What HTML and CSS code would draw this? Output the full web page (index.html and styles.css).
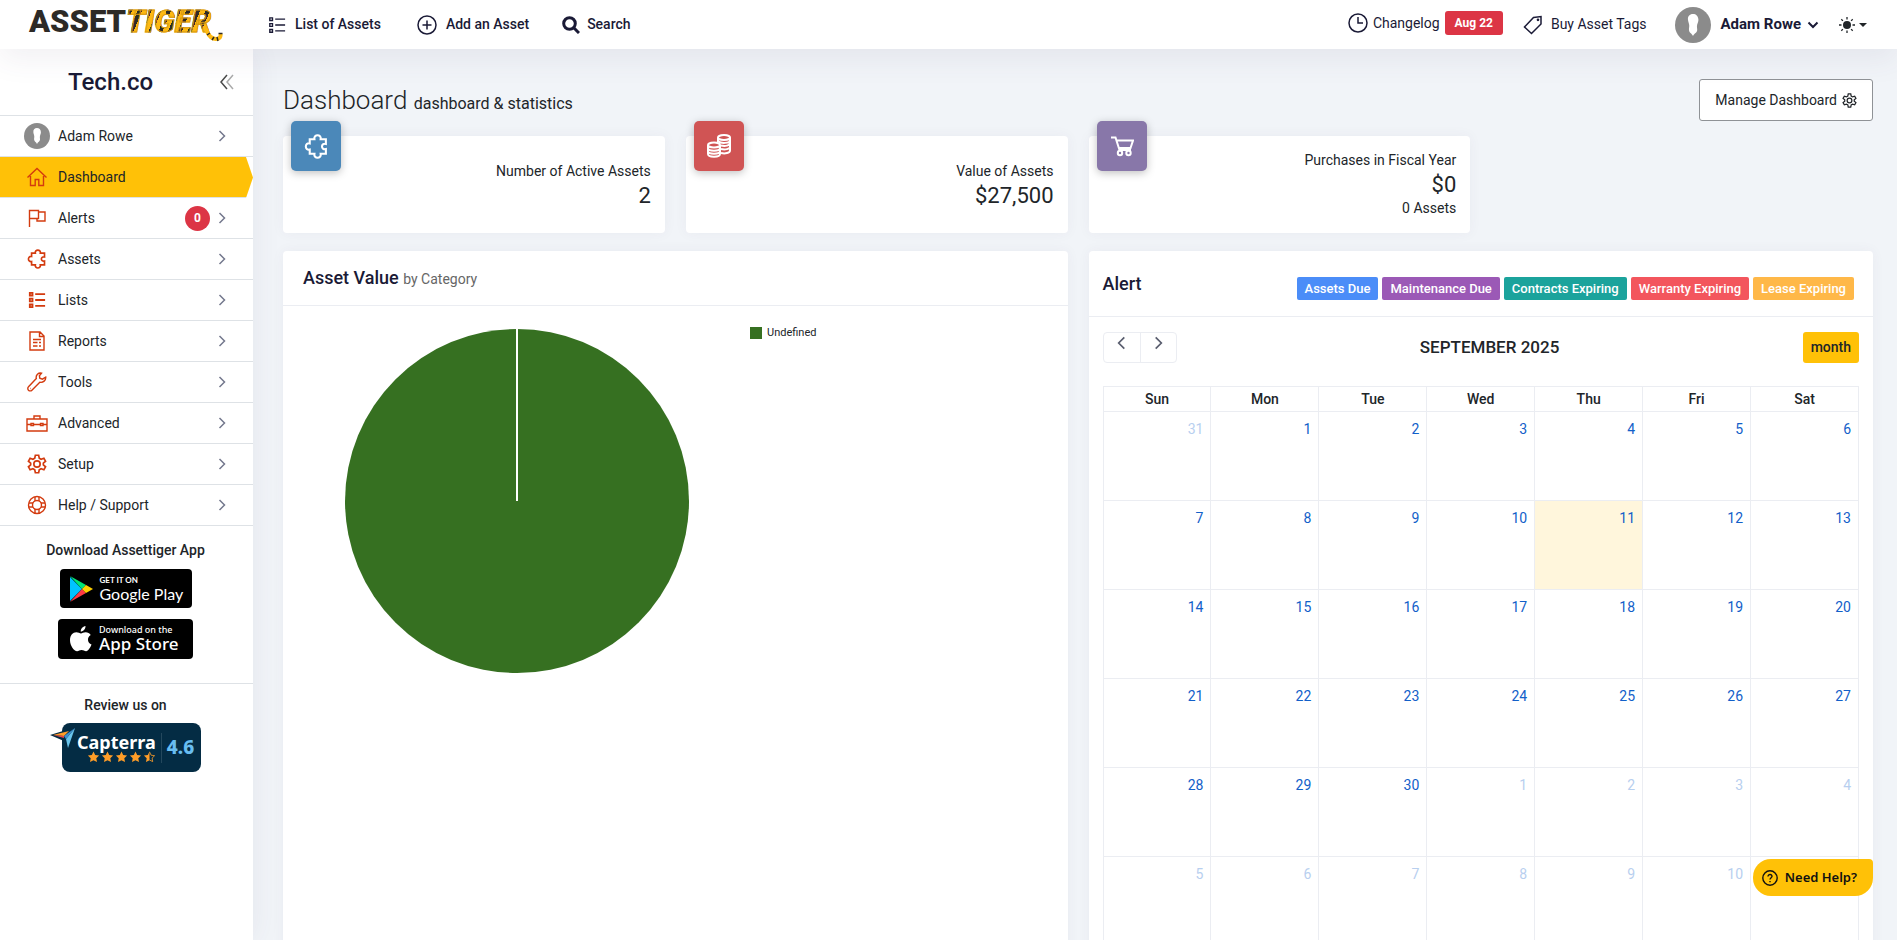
FILE: index.html
```html
<!DOCTYPE html>
<html lang="en">
<head>
  <meta charset="UTF-8">
  <meta name="viewport" content="width=device-width, initial-scale=1">
  <title>Dashboard - AssetTiger</title>
  <link rel="stylesheet" href="styles.css">
</head>
<body>
  <svg width="0" height="0" class="sprite" aria-hidden="true">
    <symbol id="i-list" viewBox="0 0 20 20"><path d="M2 2h3v3H2zM2 8.500h3v3H2zM2 15h3v3H2zM8 3.500h11M8 10h11M8 16.500h11"/></symbol>
    <symbol id="i-puzzle" viewBox="0 0 24 24"><path d="M5.500 5H10c-1-5 7-5 6 0h5v4.500c-5-1-5 6 0 5V19h-5c1 5-7 5-6 0H5.500v-4c-5 1-5-7 0-6z"/></symbol>
    <symbol id="i-gear" viewBox="0 0 24 24"><circle cx="12" cy="12" r="3.800"/><path d="M10 1.500h4l.7 3.500 2.200 1.300 3.400-1.200 2 3.600-2.700 2.300v2l2.700 2.300-2 3.600-3.400-1.200-2.200 1.300-.7 3.500h-4L9.300 19l-2.200-1.300-3.400 1.200-2-3.600L4.400 13v-2L1.700 8.700l2-3.600 3.400 1.200L9.300 5z"/></symbol>
    <symbol id="i-right" viewBox="0 0 8 12"><path d="M1.500 1l5 5-5 5"/></symbol>
    <symbol id="i-left" viewBox="0 0 8 12"><path d="M6.500 1l-5 5 5 5"/></symbol>
    <symbol id="i-avatar" viewBox="0 0 36 36"><circle cx="18" cy="18" r="18" fill="#8b8b8b" stroke="none"/><path d="M18 7c-3.500 0-5.500 2.500-5 6 .2 2 1 3 1.200 5 .2 2.500-.4 3-.2 5 .2 3 2.500 3 4 6 1.500-3 4-3 4.200-6 .1-2-.6-3 0-5.500.6-2 1.300-3 1.200-5C23.200 9 21 7 18 7z" fill="#fff" stroke="none"/></symbol>
    <symbol id="i-star" viewBox="0 0 12 12"><path d="M6 .5l1.700 3.500 3.900.5-2.800 2.700.7 3.800L6 9.200 2.500 11l.7-3.800L.4 4.500l3.900-.5z"/></symbol>
  </svg>

  <header class="topbar">
    <a href="#" class="logo" aria-label="AssetTiger">
      <span class="logo-asset">ASSET</span><span class="logo-tiger">TIGER</span>
      <svg class="logo-tail" width="18" height="14" viewBox="0 0 18 14"><path d="M1 1c2 6 5 10 10 10 3.500 0 5-2 4.500-5" stroke="#fdb913" stroke-width="4"/><path d="M17.500 5.500h-4M5 5L2 7M9 9l-2 3M12 9l1 4" stroke="#2d2a26" stroke-width="1.500"/></svg>
    </a>
    <nav class="topnav">
      <a href="#"><svg class="icon" width="18" height="18"><use href="#i-list"/></svg>List of Assets</a>
      <a href="#"><svg class="icon" width="20" height="20" viewBox="0 0 20 20"><circle cx="10" cy="10" r="9"/><path d="M10 5.500v9M5.500 10h9"/></svg>Add an Asset</a>
      <a href="#" class="search"><svg class="icon thick" width="18" height="18" viewBox="0 0 18 18"><circle cx="7.500" cy="7.500" r="5.800"/><path d="M12 12l5 5"/></svg>Search</a>
    </nav>
    <div class="topright">
      <a href="#" class="changelog"><svg class="icon" width="20" height="20" viewBox="0 0 20 20"><circle cx="10" cy="10" r="9"/><path d="M10 4v6h5"/></svg>Changelog <span class="date">Aug 22</span></a>
      <a href="#" class="tags"><svg class="icon" width="20" height="20" viewBox="0 0 20 20"><path d="M10.500 2.500L18 1.500v7.500l-9.500 9.500L1.500 12z"/><circle cx="15" cy="4.800" r=".6"/></svg>Buy Asset Tags</a>
      <button type="button" class="user"><svg width="36" height="36"><use href="#i-avatar"/></svg>Adam Rowe<svg class="icon" width="12" height="8" viewBox="0 0 12 8"><path d="M1.500 1.500L6 6l4.500-4.500" stroke-width="2"/></svg></button>
      <button type="button" class="theme" aria-label="Theme"><svg width="16" height="16" viewBox="0 0 16 16"><circle cx="8" cy="8" r="4" fill="#212529"/><path d="M8 0v2.500M8 13.500V16M0 8h2.500M13.500 8H16M2.300 2.300l1.600 1.600M12.100 12.100l1.600 1.600M13.700 2.300l-1.600 1.600M3.900 12.100l-1.600 1.600" stroke="#212529" stroke-width="1.300"/></svg><span class="caret"></span></button>
    </div>
  </header>

  <div class="layout">
    <aside class="sidebar">
      <div class="company">
        <span>Tech.co</span>
        <button type="button" class="collapse" aria-label="Collapse menu"><svg width="16" height="16" viewBox="0 0 16 16"><path d="M8 1L2 8l6 7" stroke="#4a4a4a"/><path d="M14 1L8 8l6 7" stroke="#aaa"/></svg></button>
      </div>
      <nav class="menu">
        <a href="#"><span class="mi"><svg width="26" height="26"><use href="#i-avatar"/></svg></span>Adam Rowe<svg class="arrow" width="8" height="12"><use href="#i-right"/></svg></a>
        <a href="#" class="active"><span class="mi"><svg width="20" height="20" viewBox="0 0 20 20"><path d="M.5 10.500L10 1.500l9.500 9M3.500 9v9.500h4.700v-6h3.600v6h4.700V9"/></svg></span>Dashboard</a>
        <a href="#"><span class="mi"><svg width="18" height="18" viewBox="0 0 18 18"><path d="M1.500 18V1.500h9v8h-9M10.500 3H17v9H9V9.500"/></svg></span>Alerts<span class="count">0</span><svg class="arrow" width="8" height="12"><use href="#i-right"/></svg></a>
        <a href="#"><span class="mi heavy"><svg width="20" height="20"><use href="#i-puzzle"/></svg></span>Assets<svg class="arrow" width="8" height="12"><use href="#i-right"/></svg></a>
        <a href="#"><span class="mi heavy"><svg width="18" height="18"><use href="#i-list"/></svg></span>Lists<svg class="arrow" width="8" height="12"><use href="#i-right"/></svg></a>
        <a href="#"><span class="mi"><svg width="16" height="20" viewBox="0 0 16 20"><path d="M1 1h10l4 4v14H1zM10.500 1v4.500H15M4 8.500h8M4 11.500h4.500M10 11.500h2M4 15h4.500M10 15h2"/></svg></span>Reports<svg class="arrow" width="8" height="12"><use href="#i-right"/></svg></a>
        <a href="#"><span class="mi"><svg width="20" height="20" viewBox="0 0 20 20"><path d="M14.500 1.200c-3-.7-6 1.800-5.200 5.300L1.500 14.800a2.300 2.300 0 0 0 3.400 3.400l7.900-8c3.300.8 6.300-2 5.900-5l-3.300 2-2.600-1-.4-2.500z"/><path d="M3 16.500h.5"/></svg></span>Tools<svg class="arrow" width="8" height="12"><use href="#i-right"/></svg></a>
        <a href="#"><span class="mi"><svg width="22" height="18" viewBox="0 0 22 18"><path d="M1 5h20v12H1zM8 5V2h6v3M1 10.500h4.500M8 10.500h6M16.500 10.500H21M5 9.500h2.500v2H5zM14.500 9.500H17v2h-2.500z"/></svg></span>Advanced<svg class="arrow" width="8" height="12"><use href="#i-right"/></svg></a>
        <a href="#"><span class="mi heavy"><svg width="20" height="20"><use href="#i-gear"/></svg></span>Setup<svg class="arrow" width="8" height="12"><use href="#i-right"/></svg></a>
        <a href="#"><span class="mi"><svg width="20" height="20" viewBox="0 0 20 20"><circle cx="10" cy="10" r="8.500"/><circle cx="10" cy="10" r="4.500"/><path d="M8 6V1.800M12 6V1.800M8 14v4.200M12 14v4.200M6 8H1.800M6 12H1.800M14 8h4.200M14 12h4.200"/></svg></span>Help / Support<svg class="arrow" width="8" height="12"><use href="#i-right"/></svg></a>
      </nav>
      <section class="side-box download">
        <h2>Download Assettiger App</h2>
        <a href="#" class="store google">
          <svg width="24" height="26" viewBox="0 0 24 26"><path d="M1 1v24l12-12z" fill="#00c3ff"/><path d="M1 0l16 9-4 4z" fill="#00e676"/><path d="M1 26l16-9-4-4z" fill="#ff3a44"/><path d="M17 9l7 4-7 4-4-4z" fill="#ffd000"/></svg>
          <span class="store-text"><small>GET IT ON</small><b>Google Play</b></span>
        </a>
        <a href="#" class="store apple">
          <svg width="22" height="26" viewBox="0 0 22 26"><path d="M15.500 0c.2 2.800-2 5.500-4.800 5.600C10.500 3 12.800.4 15.500 0zM11 7.500c1 0 2.500-1.200 4.700-1.200 2 0 3.900 1 5 2.700-4 2.400-3.400 7.800.8 9.500-1 2.700-3.200 6.700-5.400 6.700-1.700 0-2.400-1.100-4.500-1.100s-2.800 1.100-4.500 1.100C4 25.200 0 19.500 0 14.200c0-5 3-7.900 6.200-7.900 2 0 3.700 1.200 4.800 1.200z" fill="#fff"/></svg>
          <span class="store-text"><small>Download on the</small><b>App Store</b></span>
        </a>
      </section>
      <section class="side-box review">
        <h2>Review us on</h2>
        <a href="#" class="capterra">
          <svg class="capterra-mark" width="26" height="24" viewBox="0 0 26 24"><path d="M0 8l26-8-7 24-5-10z" fill="#042c44"/><path d="M3 8l16-4-5 5z" fill="#ff9d28"/><path d="M3 8l11 1v2z" fill="#e54747"/><path d="M25 1l-7 20-2-9z" fill="#68c5ed"/><path d="M25 1L14 9l2 3z" fill="#3b8fd0"/></svg>
          <span class="capterra-main"><b>Capterra</b>
            <span class="stars">
              <svg width="13" height="12"><use href="#i-star"/></svg><svg width="13" height="12"><use href="#i-star"/></svg><svg width="13" height="12"><use href="#i-star"/></svg><svg width="13" height="12"><use href="#i-star"/></svg><svg width="13" height="12" viewBox="0 0 12 12"><path d="M6 .5V9.200L2.500 11l.7-3.800L.4 4.500l3.900-.5z"/><path d="M6 .8l1.600 3.400 3.500.5-2.500 2.400.6 3.500L6 9" fill="none" stroke="#ff9d28" stroke-width=".8"/></svg>
            </span>
          </span>
          <span class="score">4.6</span>
        </a>
      </section>
    </aside>

    <main class="content">
      <div class="page-head">
        <h1>Dashboard <small>dashboard &amp; statistics</small></h1>
        <button type="button" class="manage">Manage Dashboard<svg width="15" height="15"><use href="#i-gear"/></svg></button>
      </div>

      <div class="cards">
        <div class="card">
          <span class="card-icon blue"><svg width="25" height="25"><use href="#i-puzzle"/></svg></span>
          <span>Number of Active Assets</span>
          <span class="value">2</span>
        </div>
        <div class="card">
          <span class="card-icon red"><svg width="24" height="24" viewBox="0 0 24 24"><ellipse cx="7" cy="11" rx="6" ry="2.500"/><path d="M1 11v9c0 3.500 12 3.500 12 0v-9M1 14c0 3.500 12 3.500 12 0M1 17c0 3.500 12 3.500 12 0"/><ellipse cx="17" cy="3.500" rx="6" ry="2.500"/><path d="M11 3.500v5M23 3.500v13c0 2.500-5 3.500-9 2.500M11.500 7.500c2 2 11.500 2 11.500-1M14 11.500c4 1 9 0 9-2M14 15c4 1 9 0 9-2"/></svg></span>
          <span>Value of Assets</span>
          <span class="value">$27,500</span>
        </div>
        <div class="card">
          <span class="card-icon purple"><svg width="24" height="24" viewBox="0 0 24 24"><path d="M1 3.500h4.500l4 12.500h11.500M6.500 6.500H23l-2.500 7.500H9"/><circle cx="10" cy="19" r="2.200"/><circle cx="18.500" cy="19" r="2.200"/></svg></span>
          <span>Purchases in Fiscal Year</span>
          <span class="value">$0</span>
          <span>0 Assets</span>
        </div>
      </div>

      <div class="panels">
        <section class="panel">
          <div class="panel-head chart-head">
            <h2>Asset Value <small>by Category</small></h2>
          </div>
          <div class="chart">
            <svg class="pie" width="344" height="344" viewBox="0 0 344 344" role="img" aria-label="Undefined 100%"><circle cx="172" cy="172" r="172" fill="#367021"/><path d="M172 0v172" stroke="#fff" stroke-width="2"/></svg>
            <div class="legend"><span class="swatch"></span>Undefined</div>
          </div>
        </section>

        <section class="panel">
          <div class="panel-head alert-head">
            <h2>Alert</h2>
            <div class="types">
              <a href="#" class="type assets">Assets Due</a>
              <a href="#" class="type maintenance">Maintenance Due</a>
              <a href="#" class="type contracts">Contracts Expiring</a>
              <a href="#" class="type warranty">Warranty Expiring</a>
              <a href="#" class="type lease">Lease Expiring</a>
            </div>
          </div>
          <div class="calendar">
            <div class="cal-bar">
              <div class="cal-nav">
                <button type="button" aria-label="Previous month"><svg width="9" height="14"><use href="#i-left"/></svg></button>
                <button type="button" aria-label="Next month"><svg width="9" height="14"><use href="#i-right"/></svg></button>
              </div>
              <h3>SEPTEMBER 2025</h3>
              <button type="button" class="month">month</button>
            </div>
            <table>
              <thead>
                <tr><th>Sun</th><th>Mon</th><th>Tue</th><th>Wed</th><th>Thu</th><th>Fri</th><th>Sat</th></tr>
              </thead>
              <tbody>
                <tr><td class="other">31</td><td>1</td><td>2</td><td>3</td><td>4</td><td>5</td><td>6</td></tr>
                <tr><td>7</td><td>8</td><td>9</td><td>10</td><td class="today">11</td><td>12</td><td>13</td></tr>
                <tr><td>14</td><td>15</td><td>16</td><td>17</td><td>18</td><td>19</td><td>20</td></tr>
                <tr><td>21</td><td>22</td><td>23</td><td>24</td><td>25</td><td>26</td><td>27</td></tr>
                <tr><td>28</td><td>29</td><td>30</td><td class="other">1</td><td class="other">2</td><td class="other">3</td><td class="other">4</td></tr>
                <tr><td class="other">5</td><td class="other">6</td><td class="other">7</td><td class="other">8</td><td class="other">9</td><td class="other">10</td><td></td></tr>
              </tbody>
            </table>
          </div>
        </section>
      </div>
    </main>
  </div>

  <button type="button" class="help"><svg width="16" height="16" viewBox="0 0 16 16"><circle cx="8" cy="8" r="7.200"/><path d="M6 6.500c0-2.800 4.200-2.600 4 0C9.900 7.700 8 7.800 8 9.500M8 11v1.300"/></svg>Need Help?</button>
</body>
</html>
```

FILE: styles.css
```css
* {
  box-sizing: border-box;
}
body {
  margin: 0;
  height: 100vh;
  display: flex;
  flex-direction: column;
  overflow: hidden;
  background: #f1f4f8;
  color: #212529;
  font-family: Roboto, sans-serif;
  font-size: 14px;
  line-height: 21px;
}
h1, h2, h3 {
  margin: 0;
}
a {
  color: inherit;
  text-decoration: none;
}
button {
  font: inherit;
  color: inherit;
  background: none;
  border: none;
  padding: 0;
  cursor: pointer;
}
svg {
  flex: none;
  fill: none;
}
.sprite {
  position: absolute;
}
.icon {
  stroke: currentColor;
  stroke-width: 1.5;
}
.thick {
  stroke-width: 3;
}

/* top bar */
.topbar {
  position: relative;
  z-index: 2;
  display: flex;
  align-items: center;
  flex: none;
  height: 49px;
  padding: 0 30px 0 29px;
  background: #fff;
  color: #1a1a36;
  box-shadow: 0 10px 30px rgba(82, 63, 105, 0.08);
}
.logo {
  display: flex;
  align-items: center;
  width: 239px;
  padding-bottom: 6px;
  font-size: 31px;
  font-weight: 900;
  line-height: 40px;
}
.logo-asset {
  color: #2d2a26;
}
.logo-tiger {
  font-style: italic;
  color: transparent;
  background: repeating-linear-gradient(112deg, #fdb913 0 5px, #2d2a26 5px 9px);
  -webkit-background-clip: text;
  background-clip: text;
  -webkit-text-stroke: 1px #d99a10;
}
.logo-tail {
  align-self: flex-end;
  margin-left: -6px;
}
.topnav {
  display: flex;
  gap: 36px;
  font-weight: 500;
}
.topnav a {
  display: flex;
  align-items: center;
  gap: 9px;
}
.topnav .search {
  margin-left: -3px;
  gap: 7px;
}
.topright {
  display: flex;
  align-items: center;
  margin-left: auto;
}
.changelog,
.tags,
.user,
.theme {
  display: flex;
  align-items: center;
}
.changelog {
  gap: 5px;
  margin-right: 20px;
  padding-bottom: 3px;
}
.date {
  padding: 0 10px;
  border-radius: 3px;
  background: #dc3545;
  color: #fff;
  font-size: 12px;
  font-weight: 700;
  line-height: 24px;
}
.tags {
  gap: 8px;
  margin-right: 28px;
}
.user {
  gap: 10px;
  margin-right: 20px;
  font-size: 15px;
  font-weight: 700;
}
.user .icon {
  margin-left: -4px;
}
.theme {
  gap: 4px;
}
.caret {
  border: 4px solid transparent;
  border-top-color: #212529;
  border-bottom: 0;
}

/* sidebar */
.layout {
  display: flex;
  flex: 1;
  min-height: 0;
}
.sidebar {
  position: relative;
  z-index: 1;
  flex: none;
  width: 253px;
  background: #fff;
  box-shadow: 0 0 28px rgba(82, 63, 105, 0.08);
}
.company {
  display: flex;
  align-items: center;
  justify-content: space-between;
  height: 67px;
  padding: 0 18px 0 68px;
  border-bottom: 1px solid #dee2e6;
  color: #1a1a36;
  font-size: 24px;
  font-weight: 500;
}
.collapse {
  display: flex;
  stroke-width: 1.5;
}
.menu a {
  display: flex;
  align-items: center;
  height: 41px;
  padding: 0 27px 0 24px;
  border-bottom: 1px solid #dee2e6;
}
.menu .active {
  background: linear-gradient(#ffc107, #ffc107) padding-box;
  clip-path: polygon(0 0, 246px 0, 100% 50%, 246px 100%, 0 100%);
}
.mi {
  display: flex;
  justify-content: center;
  width: 26px;
  margin-right: 8px;
  stroke: #d33b0f;
  stroke-width: 1.4;
}
.mi.heavy {
  stroke-width: 2;
}
.arrow {
  margin-left: auto;
  stroke: #74788d;
  stroke-width: 1.5;
}
.count {
  width: 25px;
  margin-left: auto;
  border-radius: 50%;
  background: #dc3545;
  color: #fff;
  font-size: 12px;
  font-weight: 700;
  line-height: 25px;
  text-align: center;
}
.count + .arrow {
  margin-left: 8px;
}
.side-box {
  display: flex;
  flex-direction: column;
  align-items: center;
  padding-right: 2px;
}
.side-box h2 {
  font-size: 14px;
  font-weight: 500;
}
.download {
  gap: 11px;
  padding-top: 14px;
  padding-bottom: 24px;
  border-bottom: 1px solid #dee2e6;
}
.download h2 {
  margin-bottom: -3px;
}
.review {
  gap: 7px;
  padding-top: 11px;
}
.store {
  display: flex;
  align-items: center;
  gap: 7px;
  width: 132px;
  height: 39px;
  padding-left: 9px;
  border-radius: 4px;
  background: #000;
  color: #fff;
}
.store.apple {
  width: 135px;
  height: 40px;
  padding-left: 12px;
}
.store-text {
  display: flex;
  flex-direction: column;
}
.store small {
  font-family: Lato, sans-serif;
  font-size: 8px;
  font-weight: 700;
  line-height: 10px;
}
.store b {
  font-family: Lato, sans-serif;
  font-size: 16px;
  font-weight: 400;
  line-height: 18px;
}
.apple small,
.apple b {
  font-family: "Noto Sans", sans-serif;
  font-weight: 500;
}
.apple small {
  font-size: 9px;
}
.apple b {
  font-size: 17px;
}
.capterra {
  position: relative;
  display: flex;
  align-items: center;
  width: 139px;
  height: 49px;
  margin-left: 12px;
  padding-left: 15px;
  border-radius: 8px;
  background: #042c44;
  color: #fff;
}
.capterra-mark {
  position: absolute;
  left: -12px;
  top: 4px;
}
.capterra-main {
  display: flex;
  flex-direction: column;
  align-items: flex-end;
  padding-right: 5px;
  border-right: 1px solid #24485d;
}
.capterra b {
  font-family: "Noto Sans", sans-serif;
  font-size: 18px;
  line-height: 18px;
}
.stars {
  display: flex;
  gap: 1px;
}
.stars svg {
  fill: #ff9d28;
}
.score {
  margin-left: 5px;
  color: #68bdf0;
  font-family: "Noto Sans", sans-serif;
  font-size: 19px;
  font-weight: 800;
}

/* content */
.content {
  flex: 1;
  min-width: 0;
  padding: 30px 24px 0 30px;
}
.page-head {
  display: flex;
  align-items: center;
  justify-content: space-between;
  height: 42px;
}
h1 {
  font-size: 26px;
  font-weight: 300;
  line-height: 42px;
  padding-top: 3px;
}
h1 small {
  font-size: 16px;
  font-weight: 400;
}
.manage {
  display: flex;
  align-items: center;
  gap: 5px;
  height: 42px;
  padding: 0 15px;
  border: 1px solid #8f9296;
  border-radius: 3px;
  background: #fff;
  stroke: #212529;
  stroke-width: 2;
}
.cards {
  display: grid;
  grid-template-columns: repeat(4, 1fr);
  gap: 21px;
  margin: 15px 0 18px;
}
.card {
  position: relative;
  display: flex;
  flex-direction: column;
  align-items: flex-end;
  justify-content: center;
  height: 97px;
  padding-right: 14px;
  border-radius: 4px;
  background: #fff;
  box-shadow: 0 0 13px rgba(82, 63, 105, 0.05);
}
.value {
  font-size: 22px;
  line-height: 27px;
}
.card-icon {
  position: absolute;
  top: -15px;
  left: 8px;
  display: flex;
  align-items: center;
  justify-content: center;
  width: 50px;
  height: 50px;
  border-radius: 5px;
  box-shadow: 0 2px 8px rgba(0, 0, 0, 0.25);
  stroke: #fff;
  stroke-width: 2;
}
.blue {
  background: #4b88b9;
}
.red {
  background: #d05454;
}
.purple {
  background: #8877a9;
}
.panels {
  display: grid;
  grid-template-columns: 1fr 1fr;
  gap: 21px;
}
.panel {
  min-height: 720px;
  border-radius: 4px;
  background: #fff;
  box-shadow: 0 0 13px rgba(82, 63, 105, 0.05);
}
.panel-head {
  display: flex;
  align-items: center;
  justify-content: space-between;
  border-bottom: 1px solid #ebedf2;
}
.panel-head h2 {
  color: #1a1a36;
  font-size: 18px;
  font-weight: 500;
}
.panel-head small {
  color: #666;
  font-size: 14px;
  font-weight: 400;
}
.chart-head {
  height: 55px;
  padding: 0 20px;
}
.chart {
  display: flex;
  align-items: flex-start;
  gap: 61px;
  padding: 20px 62px;
}
.pie {
  margin-top: 3px;
}
.legend {
  display: flex;
  align-items: center;
  gap: 5px;
  font-size: 11px;
  line-height: 14px;
}
.swatch {
  width: 12px;
  height: 12px;
  background: #367021;
}
.alert-head {
  height: 66px;
  padding: 0 19px 0 14px;
}
.types {
  display: flex;
  gap: 4px;
  padding-top: 10px;
}
.type {
  padding: 0 8px;
  border-radius: 2px;
  color: #fff;
  font-size: 13px;
  font-weight: 500;
  line-height: 23px;
}
.assets {
  background: #4b8df8;
}
.maintenance {
  background: #9b59b6;
}
.contracts {
  background: #1ba39c;
}
.warranty {
  background: #f3565d;
}
.lease {
  background: #ffb848;
}
.calendar {
  padding: 15px 14px;
}
.cal-bar {
  display: flex;
  align-items: center;
  justify-content: space-between;
  margin-bottom: 23px;
}
.cal-bar h3 {
  font-size: 17px;
  font-weight: 500;
}
.cal-nav {
  display: flex;
  border: 1px solid #ebedf2;
  border-radius: 4px;
}
.cal-nav button {
  width: 36px;
  height: 29px;
  padding-bottom: 4px;
  stroke: #595d6e;
  stroke-width: 1.5;
}
.cal-nav button + button {
  border-left: 1px solid #ebedf2;
}
.month {
  height: 31px;
  padding: 0 8px;
  border-radius: 3px;
  background: #ffc107;
  font-weight: 500;
}
table {
  width: 100%;
  table-layout: fixed;
  border-collapse: collapse;
}
th, td {
  border: 1px solid #ebedf2;
}
th {
  height: 25px;
  padding: 0;
  font-weight: 500;
}
td {
  height: 89px;
  padding: 7px;
  color: #1260c9;
  text-align: right;
  vertical-align: top;
}
.other {
  color: #b8cfef;
}
.today {
  background: #fff6dc;
}

/* floating help button */
.help {
  position: fixed;
  right: 24px;
  bottom: 44px;
  z-index: 3;
  display: flex;
  align-items: center;
  gap: 7px;
  height: 37px;
  padding: 0 16px 0 9px;
  border-radius: 18px 4px 18px 18px;
  background: #ffc107;
  color: #111;
  font-family: "Noto Sans", sans-serif;
  font-size: 13px;
  font-weight: 600;
  stroke: #111;
  stroke-width: 1.4;
}
```
